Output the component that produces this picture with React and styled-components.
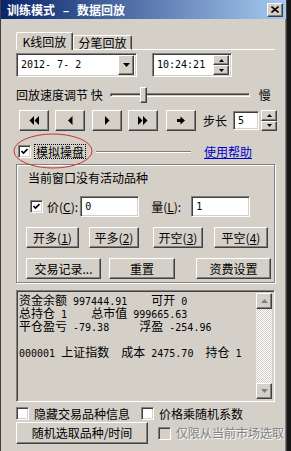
import React from 'react';
import styled, { createGlobalStyle } from 'styled-components';

const GlobalStyle = createGlobalStyle`
  * { box-sizing: border-box; }
  html, body { margin: 0; padding: 0; background: #161616; }
  body {
    font-family: "Noto Sans CJK SC", sans-serif;
    font-size: 12px;
    color: #000;
    line-height: 1;
  }
`;

const raised = `
  border: 1px solid;
  border-color: #fff #404040 #404040 #fff;
  box-shadow: inset -1px -1px #808080, inset 1px 1px #d4d0c8;
  background: #d4d0c8;
`;

const sunken = `
  border: 1px solid;
  border-color: #808080 #fff #fff #808080;
  box-shadow: inset 1px 1px #404040, inset -1px -1px #d4d0c8;
`;

const Window = styled.div`
  width: 287px;
  height: 451px;
  background: #d4d0c8;
  border-left: 1px solid #404040;
  border-right: 1px solid #404040;
  box-shadow: inset -1px 0 #808080;
  display: flex;
  flex-direction: column;
  overflow: hidden;
`;

const TitleBar = styled.div`
  height: 19px;
  flex: none;
  background: linear-gradient(to right, #0a246a, #a6caf0);
  display: flex;
  align-items: center;
  justify-content: space-between;
  padding: 0 3px 0 6px;
`;

const TitleText = styled.div`
  color: #fff;
  font-weight: 700;
  font-size: 12px;
  word-spacing: 5px;
  white-space: pre;
`;

const CloseBtn = styled.div`
  ${raised}
  width: 16px;
  height: 14px;
  display: flex;
  align-items: center;
  justify-content: center;
`;

const Body = styled.div`
  padding: 0 11px 0 15px;
  display: flex;
  flex-direction: column;
`;

const TabStrip = styled.div`
  margin-top: 13px;
  height: 18px;
  display: flex;
  align-items: flex-end;
`;

const Tab = styled.div`
  height: ${p => (p.$active ? 18 : 15)}px;
  width: ${p => p.$w}px;
  border-top: 1px solid #fff;
  border-left: 1px solid #fff;
  border-right: 1px solid #404040;
  box-shadow: inset -1px 0 #808080;
  border-bottom: ${p => (p.$active ? 'none' : '1px solid #fff')};
  border-radius: 2px 2px 0 0;
  display: flex;
  align-items: center;
  justify-content: center;
  padding-top: ${p => (p.$active ? 0 : 1)}px;
  white-space: pre;
`;

const TabLine = styled.div`
  flex: 1;
  border-bottom: 1px solid #fff;
`;

const Row = styled.div`
  display: flex;
  align-items: center;
  margin-top: ${p => p.$mt || 0}px;
  height: ${p => p.$h}px;
  padding-left: ${p => p.$pl || 0}px;
  position: relative;
`;

const Field = styled.div`
  ${sunken}
  background: ${p => (p.$disabled ? '#d4d0c8' : '#fff')};
  width: ${p => p.$w}px;
  height: ${p => p.$h || 24}px;
  margin-left: ${p => p.$ml || 0}px;
  display: flex;
  align-items: center;
  padding: 2px 2px 2px 4px;
  flex: none;
`;

const Mono = styled.span`
  font-family: "DejaVu Sans Mono", "Liberation Mono", monospace;
  font-size: 10px;
  white-space: pre;
`;

const Cn = styled.span`
  font-family: "Noto Sans CJK SC", sans-serif;
  font-size: 12px;
`;

const FieldText = styled.div`
  flex: 1;
  font-family: "DejaVu Sans Mono", "Liberation Mono", monospace;
  font-size: 10px;
  white-space: pre;
`;

const DropBtn = styled.div`
  ${raised}
  width: 16px;
  height: 20px;
  display: flex;
  align-items: center;
  justify-content: center;
`;

const SpinCol = styled.div`
  display: flex;
  flex-direction: column;
  height: ${p => p.$h}px;
  width: 16px;
  margin-left: ${p => p.$ml || 0}px;
  flex: none;
`;

const SpinBtn = styled.div`
  ${raised}
  flex: 1;
  display: flex;
  align-items: center;
  justify-content: center;
`;

const Label = styled.span`
  white-space: pre;
  margin-left: ${p => p.$ml || 0}px;
  color: ${p => (p.$disabled ? '#808080' : '#000')};
  text-shadow: ${p => (p.$disabled ? '1px 1px #fff' : 'none')};
  flex: none;
`;

const SliderArea = styled.div`
  position: relative;
  width: 140px;
  height: 18px;
  margin-left: 7px;
  display: flex;
  align-items: center;
`;

const Track = styled.div`
  width: 100%;
  height: 4px;
  border-top: 1px solid #808080;
  border-left: 1px solid #808080;
  border-bottom: 1px solid #fff;
  border-right: 1px solid #fff;
  box-shadow: inset 1px 1px #404040;
`;

const Thumb = styled.div`
  ${raised}
  position: absolute;
  top: 1px;
  width: 7px;
  height: 16px;
`;

const Button = styled.div`
  ${raised}
  width: ${p => p.$w}px;
  height: ${p => p.$h || 21}px;
  margin-left: ${p => p.$ml || 0}px;
  display: flex;
  align-items: center;
  justify-content: center;
  white-space: pre;
  flex: none;
`;

const Box = styled.div`
  ${sunken}
  width: 13px;
  height: 13px;
  background: ${p => (p.$disabled ? '#d4d0c8' : '#fff')};
  margin-left: ${p => p.$ml || 0}px;
  display: flex;
  align-items: center;
  justify-content: center;
  flex: none;
`;

const Focus = styled.span`
  display: inline-flex;
  align-items: center;
  height: 15px;
  padding: 0 1px;
  border: 1px dotted #000;
  margin-left: 3px;
  white-space: pre;
`;

const Etched = styled.div`
  width: 95px;
  margin-left: 10px;
  border-top: 1px solid #808080;
  border-bottom: 1px solid #fff;
`;

const Link = styled.span`
  color: #0000cc;
  text-decoration: underline;
  margin-left: 13px;
`;

const Ring = styled.svg`
  position: absolute;
  left: -4px;
  top: -13px;
  pointer-events: none;
`;

const Group = styled.div`
  margin-top: 6px;
  height: 119px;
  border: 1px solid #808080;
  box-shadow: inset 1px 1px #fff, 1px 1px #fff;
  padding: 6px 0 0 9px;
  display: flex;
  flex-direction: column;
`;

const Note = styled.div`
  margin-left: 2px;
  height: 14px;
  display: flex;
  align-items: center;
`;

const Log = styled.div`
  ${sunken}
  margin-top: 7px;
  height: 112px;
  display: flex;
  background: #d4d0c8;
  padding: 2px;
`;

const LogText = styled.div`
  flex: 1;
`;

const LogLine = styled.div`
  height: 13px;
  line-height: 13px;
  white-space: pre;
`;

const ScrollBar = styled.div`
  width: 16px;
  display: flex;
  flex-direction: column;
  justify-content: space-between;
  background-color: #fff;
  background-image: repeating-conic-gradient(#d4d0c8 0 25%, #fff 0 50%);
  background-size: 2px 2px;
`;

const ScrollBtn = styled.div`
  ${raised}
  width: 16px;
  height: 16px;
  display: flex;
  align-items: center;
  justify-content: center;
`;

const Tri = ({ dir = 'down', color = '#000', w = 7, h = 4 }) => (
  <svg width={w} height={h} viewBox={`0 0 ${w} ${h}`}>
    {dir === 'down' ? (
      <polygon points={`0,0 ${w},0 ${w / 2},${h}`} fill={color} />
    ) : (
      <polygon points={`0,${h} ${w},${h} ${w / 2},0`} fill={color} />
    )}
  </svg>
);

const Check = () => (
  <svg width="7" height="7" viewBox="0 0 7 7">
    <polyline points="0.5,3 2.5,5 6.5,1" fill="none" stroke="#000" strokeWidth="1.6" />
  </svg>
);

const icons = {
  first: 'M5 0 L0.5 4.5 L5 9 Z M10 0 L5.5 4.5 L10 9 Z',
  prev: 'M7.5 0 L3 4.5 L7.5 9 Z',
  next: 'M3 0 L7.5 4.5 L3 9 Z',
  last: 'M0 0 L4.5 4.5 L0 9 Z M5 0 L9.5 4.5 L5 9 Z',
  step: 'M1 3 H4.5 V6 H1 Z M4.5 0.5 L9 4.5 L4.5 8.5 Z',
};

const Transport = ({ d }) => (
  <svg width="10" height="9" viewBox="0 0 10 9">
    <path d={d} fill="#000" />
  </svg>
);

const Ul = styled.span`
  text-decoration: underline;
`;

const Key = ({ k }) => (
  <>
    (<Ul>{k}</Ul>)
  </>
);

const mixed = s =>
  s.split(/([\u4e00-\u9fff]+)/).map((part, i) =>
    /[\u4e00-\u9fff]/.test(part) ? <Cn key={i}>{part}</Cn> : <Mono key={i}>{part}</Mono>
  );

const logLines = [
  '资金余额 997444.91    可开 0',
  '总持仓 1    总市值 999665.63',
  '平仓盈亏 -79.38     浮盈 -254.96',
  '',
  '000001 上证指数  成本 2475.70  持仓 1',
];

export default function App() {
  return (
    <>
      <GlobalStyle />
      <Window>
        <TitleBar>
          <TitleText>训练模式 – 数据回放</TitleText>
          <CloseBtn>
            <svg width="8" height="7" viewBox="0 0 8 7">
              <path d="M0.5 0.5 L7.5 6.5 M7.5 0.5 L0.5 6.5" stroke="#000" strokeWidth="1.6" />
            </svg>
          </CloseBtn>
        </TitleBar>

        <Body>
          <TabStrip>
            <Tab $active $w={57}>K线回放</Tab>
            <Tab $w={59}>分笔回放</Tab>
            <TabLine />
          </TabStrip>

          <Row $mt={3} $h={24}>
            <Field $w={121}>
              <FieldText>2012- 7- 2</FieldText>
              <DropBtn>
                <Tri />
              </DropBtn>
            </Field>
            <Field $w={80} $ml={15}>
              <FieldText>10:24:21</FieldText>
              <SpinCol $h={20}>
                <SpinBtn><Tri dir="up" w={5} h={3} /></SpinBtn>
                <SpinBtn><Tri w={5} h={3} /></SpinBtn>
              </SpinCol>
            </Field>
          </Row>

          <Row $mt={9} $h={18}>
            <Label>回放速度调节 快</Label>
            <SliderArea>
              <Track />
              <Thumb style={{ left: 30 }} />
            </SliderArea>
            <Label $ml={9}>慢</Label>
          </Row>

          <Row $mt={6} $h={21} $pl={3}>
            <Button $w={30}><Transport d={icons.first} /></Button>
            <Button $w={30} $ml={6}><Transport d={icons.prev} /></Button>
            <Button $w={30} $ml={7}><Transport d={icons.next} /></Button>
            <Button $w={30} $ml={6}><Transport d={icons.last} /></Button>
            <Button $w={30} $ml={8}><Transport d={icons.step} /></Button>
            <Label $ml={7}>步长</Label>
            <Field $w={26} $h={19} $ml={6}>
              <FieldText>5</FieldText>
            </Field>
            <SpinCol $h={21} $ml={2}>
              <SpinBtn><Tri dir="up" w={5} h={3} /></SpinBtn>
              <SpinBtn><Tri w={5} h={3} /></SpinBtn>
            </SpinCol>
          </Row>

          <Row $mt={14} $h={13} $pl={2}>
            <Box><Check /></Box>
            <Focus>模拟操盘</Focus>
            <Etched />
            <Link>使用帮助</Link>
            <Ring width="82" height="38" viewBox="0 0 82 38">
              <ellipse cx="41" cy="19" rx="39" ry="17" fill="none" stroke="#d0302c" strokeWidth="1" />
            </Ring>
          </Row>

          <Group>
            <Note>当前窗口没有活动品种</Note>
            <Row $mt={11} $h={21} $pl={4}>
              <Box><Check /></Box>
              <Label $ml={4}>价<Key k="C" />:</Label>
              <Field $w={59} $h={21} $ml={2}>
                <FieldText>0</FieldText>
              </Field>
              <Label $ml={12}>量<Key k="L" />:</Label>
              <Field $w={59} $h={21} $ml={10}>
                <FieldText>1</FieldText>
              </Field>
            </Row>
            <Row $mt={10} $h={21}>
              <Button $w={53}>开多<Key k="1" /></Button>
              <Button $w={50} $ml={10}>平多<Key k="2" /></Button>
              <Button $w={50} $ml={14}>开空<Key k="3" /></Button>
              <Button $w={54} $ml={11}>平空<Key k="4" /></Button>
            </Row>
            <Row $mt={10} $h={21}>
              <Button $w={75}>交易记录...</Button>
              <Button $w={66} $ml={8}>重置</Button>
              <Button $w={75} $ml={21}>资费设置</Button>
            </Row>
          </Group>

          <Log>
            <LogText>
              {logLines.map((l, i) => (
                <LogLine key={i}>{mixed(l)}</LogLine>
              ))}
            </LogText>
            <ScrollBar>
              <ScrollBtn><Tri dir="up" color="#808080" w={7} h={4} /></ScrollBtn>
              <ScrollBtn><Tri color="#808080" w={7} h={4} /></ScrollBtn>
            </ScrollBar>
          </Log>

          <Row $mt={5} $h={13}>
            <Box />
            <Label $ml={5}>隐藏交易品种信息</Label>
            <Box $ml={11} />
            <Label $ml={5}>价格乘随机系数</Label>
          </Row>

          <Row $mt={2} $h={22}>
            <Button $w={132} $h={22}>随机选取品种/时间</Button>
            <Box $disabled $ml={10} />
            <Label $ml={5} $disabled>仅限从当前市场选取</Label>
          </Row>
        </Body>
      </Window>
    </>
  );
}
